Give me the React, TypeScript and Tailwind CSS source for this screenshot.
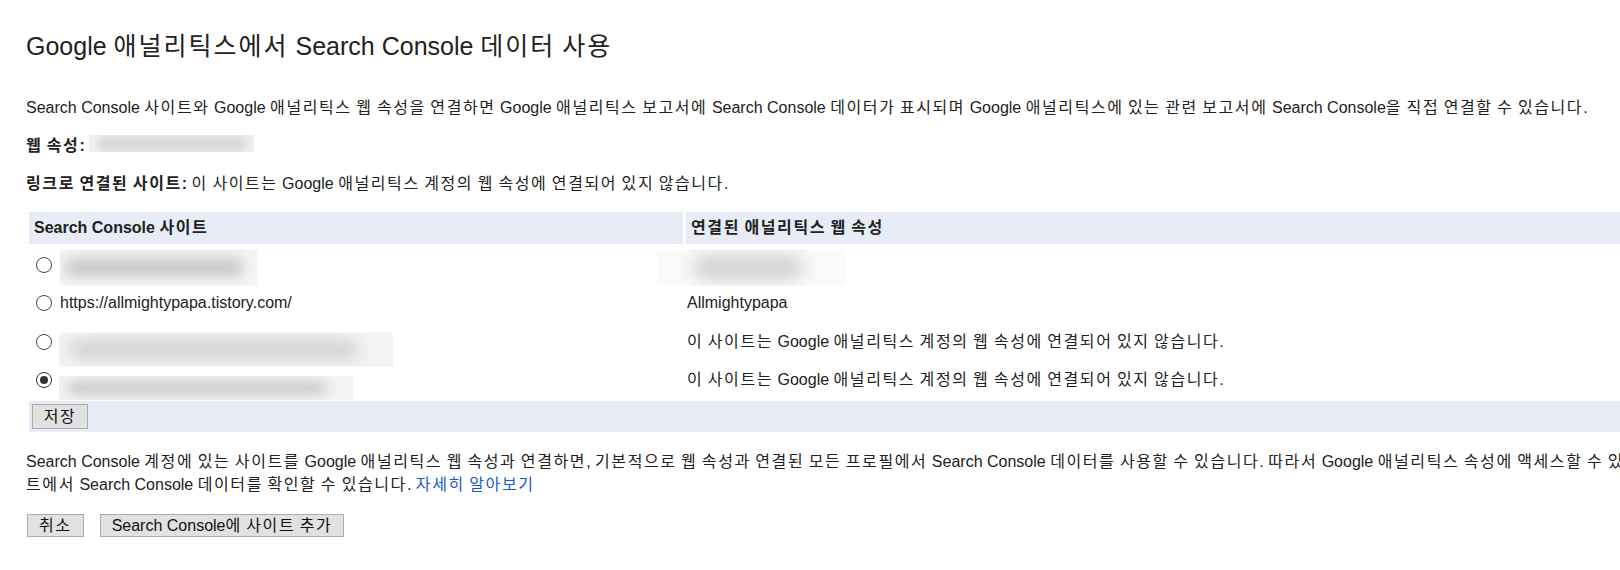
type RadioProps = { checked?: boolean };

const Radio = ({ checked = false }: RadioProps) => (
    <span
        className={[
            "ml-[6px] mr-[8px] flex h-4 w-4 shrink-0 items-center justify-center rounded-full bg-white",
            checked ? "border-[1.5px] border-[#333]" : "border border-[#444]",
        ].join(" ")}
    >
        {checked && <span className="h-2 w-2 rounded-full bg-[#333]" />}
    </span>
);

// hangul in the installed CJK font is narrower than in the screenshot, so hangul runs get a bit of tracking
const HANGUL = /([\uAC00-\uD7A3\u3131-\u318E]+)/;

const K = ({ children, wide = "tracking-[0.1em]" }: { children: string; wide?: string }) => (
    <>
        {children.split(HANGUL).map((part, i) =>
            i % 2 === 1 ? (
                <span key={i} className={wide}>
                    {part}
                </span>
            ) : (
                part
            ),
        )}
    </>
);

// redacted values in the screenshot: a faint box with a blurred grey smear
type BlurProps = { box: string; bar: string };

const Blur = ({ box, bar }: BlurProps) => (
    <span className={["inline-flex shrink-0 items-center overflow-hidden", box].join(" ")}>
        <span className={["block rounded-full", bar].join(" ")} />
    </span>
);

const Button = ({ children, className = "" }: { children: React.ReactNode; className?: string }) => (
    <button
        type="button"
        className={[
            "flex items-center justify-center border border-[#adadad] bg-[#e1e1e1] text-[16px] leading-none text-[#111]",
            className,
        ].join(" ")}
    >
        <span>{children}</span>
    </button>
);

const NOT_LINKED = "이 사이트는 Google 애널리틱스 계정의 웹 속성에 연결되어 있지 않습니다.";

export default function App() {
    return (
        <div className="h-[570px] w-[1620px] overflow-hidden bg-white">
            <div className="w-[1800px] pl-[26px] pt-[32px] font-['Liberation_Sans',Arial,'Noto_Sans_CJK_KR',sans-serif] text-[16px] leading-[22px] text-[#222]">
                <h1 className="text-[25px] font-normal leading-[28px]">
                    <K wide="tracking-[0.08em]">Google 애널리틱스에서 Search Console 데이터 사용</K>
                </h1>

                <p className="mt-[37px]">
                    <K>
                        Search Console 사이트와 Google 애널리틱스 웹 속성을 연결하면 Google 애널리틱스 보고서에 Search Console 데이터가 표시되며 Google 애널리틱스에 있는 관련 보고서에 Search Console을 직접 연결할 수 있습니다.
                    </K>
                </p>

                <p className="mt-[16px] flex items-center">
                    <b>
                        <K>웹 속성:</K>
                    </b>
                    <span className="ml-[4px] -translate-y-[1px]">
                        <Blur box="h-[17px] w-[165px] bg-[#f0f0f0]" bar="ml-[8px] h-[13px] w-[150px] bg-[#d4d4d4] blur-[4px]" />
                    </span>
                </p>

                <p className="mt-[16px]">
                    <b>
                        <K>링크로 연결된 사이트:</K>
                    </b>{" "}
                    <K>{NOT_LINKED}</K>
                </p>

                <table className="mt-[14px] w-[1760px] border-separate border-spacing-[3px]">
                    <thead>
                        <tr>
                            <th className="h-[32px] w-[654px] bg-[#e8ecf7] pl-[5px] text-left font-bold">
                                <K>Search Console 사이트</K>
                            </th>
                            <th className="h-[32px] bg-[#e8ecf7] pl-[5px] text-left font-bold">
                                <K>연결된 애널리틱스 웹 속성</K>
                            </th>
                        </tr>
                    </thead>
                    <tbody>
                        <tr>
                            <td className="p-[1px]">
                                <div className="flex h-[33.5px] items-center">
                                    <Radio />
                                    <Blur box="h-[36px] w-[197px] translate-y-[2.5px] bg-[#f5f5f5]" bar="ml-[4px] h-[18px] w-[180px] bg-[#c6c6c6] blur-[7px]" />
                                </div>
                            </td>
                            <td className="p-[1px]">
                                <div className="flex h-[33.5px] items-center">
                                    <Blur box="-ml-[30px] h-[36px] w-[188px] translate-y-[2.5px] bg-[#fafafa]" bar="ml-[36px] h-[22px] w-[110px] bg-[#cdcdcd] blur-[9px]" />
                                </div>
                            </td>
                        </tr>
                        <tr>
                            <td className="p-[1px]">
                                <div className="flex h-[33.5px] items-center">
                                    <Radio />
                                    https://allmightypapa.tistory.com/
                                </div>
                            </td>
                            <td className="p-[1px]">
                                <div className="flex h-[33.5px] items-center">Allmightypapa</div>
                            </td>
                        </tr>
                        <tr>
                            <td className="p-[1px]">
                                <div className="flex h-[33.5px] items-center">
                                    <Radio />
                                    <Blur box="-ml-[1px] h-[34px] w-[334px] translate-y-[7.5px] bg-[#f4f4f4]" bar="ml-[10px] h-[18px] w-[290px] bg-[#cfcfcf] blur-[8px]" />
                                </div>
                            </td>
                            <td className="p-[1px]">
                                <div className="flex h-[33.5px] items-center">
                                    <span>
                                        <K>{NOT_LINKED}</K>
                                    </span>
                                </div>
                            </td>
                        </tr>
                        <tr>
                            <td className="p-[1px]">
                                <div className="flex h-[33.5px] items-center">
                                    <Radio checked />
                                    <Blur box="-ml-[1px] h-[24px] w-[294px] translate-y-[8px] bg-[#f3f3f3]" bar="ml-[8px] h-[14px] w-[260px] bg-[#cbcbcb] blur-[6px]" />
                                </div>
                            </td>
                            <td className="p-[1px]">
                                <div className="flex h-[33.5px] items-center">
                                    <span>
                                        <K>{NOT_LINKED}</K>
                                    </span>
                                </div>
                            </td>
                        </tr>
                        <tr>
                            <td colSpan={2} className="h-[31px] bg-[#e8ecf7] px-[3px] py-[2px]">
                                <Button className="h-[25px] w-[56px]">
                                    <K>저장</K>
                                </Button>
                            </td>
                        </tr>
                    </tbody>
                </table>

                <p className="mt-[15px] whitespace-nowrap leading-[23px]">
                    <K>
                        Search Console 계정에 있는 사이트를 Google 애널리틱스 웹 속성과 연결하면, 기본적으로 웹 속성과 연결된 모든 프로필에서 Search Console 데이터를 사용할 수 있습니다. 따라서 Google 애널리틱스 속성에 액세스할 수 있는 사이
                    </K>
                    <br />
                    <K>트에서 Search Console 데이터를 확인할 수 있습니다.</K>{" "}
                    <a href="#" className="text-[#1a5bc9]">
                        <K>자세히 알아보기</K>
                    </a>
                </p>

                <div className="mt-[18px] flex gap-[16px] pl-[1px]">
                    <Button className="h-[23px] px-[11px]">
                        <K>취소</K>
                    </Button>
                    <Button className="h-[23px] px-[11px]">
                        <K>Search Console에 사이트 추가</K>
                    </Button>
                </div>
            </div>
        </div>
    );
}
